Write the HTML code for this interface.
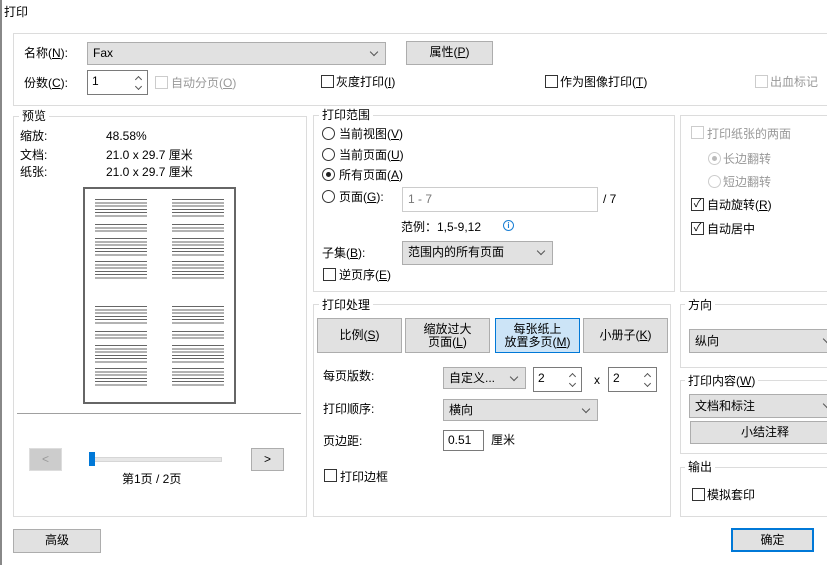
<!DOCTYPE html><html><head><meta charset="utf-8"><style>
*{box-sizing:border-box;margin:0;padding:0}
body{width:827px;height:565px;background:#fff;position:relative;overflow:hidden;font:12px "Liberation Sans","Noto Sans CJK SC",sans-serif;color:#000}
.a{position:absolute;white-space:nowrap;line-height:14px}
.g{position:absolute;border:1px solid #dcdcdc}
.lg{position:absolute;background:#fff;padding:0 3px;line-height:14px}
.cb{position:absolute;width:13px;height:13px;border:1px solid #333;background:#fff}
.cb.d{border-color:#ccc}
.rd{position:absolute;width:13px;height:13px;border:1px solid #333;border-radius:50%;background:#fff}
.rd.d{border-color:#ccc}
.btn{position:absolute;background:#e1e1e1;border:1px solid #adadad;text-align:center;line-height:20px}
.cmb{position:absolute;background:#e1e1e1;border:1px solid #adadad;padding-left:5px;line-height:20px}
.cmb:after{content:"";position:absolute;right:8px;top:6px;width:5px;height:5px;border-right:1px solid #555;border-bottom:1px solid #555;transform:rotate(45deg)}
.in{position:absolute;background:#fff;border:1px solid #7a7a7a;padding-left:4px;line-height:20px}
.sp{position:absolute;right:4px;top:4px;width:8px;height:15px}
.sp:before,.sp:after{content:"";position:absolute;left:1px;width:4px;height:4px;border-left:1.5px solid #555;border-top:1.5px solid #555}
.sp:before{top:2px;transform:rotate(45deg)}
.sp:after{top:9px;transform:rotate(-135deg)}
.u{text-decoration:underline}
.dis{color:#999}
.pq{position:absolute;width:52px}
.p{position:absolute;left:0;width:52px;background:repeating-linear-gradient(#666 0 1px,transparent 1px 3.3px)}
</style></head><body>
<div style="position:absolute;left:0;top:0;width:2px;height:565px;background:#888"></div>
<div class="a" style="left:4px;top:5px">打印</div>

<div class="g" style="left:13px;top:33px;width:830px;height:73px"></div>
<div class="a" style="left:24px;top:46px">名称(<span class="u">N</span>):</div>
<div class="cmb" style="left:87px;top:42px;width:299px;height:23px">Fax</div>
<div class="btn" style="left:406px;top:41px;width:87px;height:24px">属性(<span class="u">P</span>)</div>
<div class="a" style="left:24px;top:76px">份数(<span class="u">C</span>):</div>
<div class="in" style="left:87px;top:70px;width:61px;height:25px">1<div class="sp"></div></div>
<div class="cb d" style="left:155px;top:76px"></div><div class="a dis" style="left:171px;top:76px">自动分页(<span class="u">O</span>)</div>
<div class="cb" style="left:321px;top:75px"></div><div class="a" style="left:336px;top:75px">灰度打印(<span class="u">I</span>)</div>
<div class="cb" style="left:545px;top:75px"></div><div class="a" style="left:560px;top:75px">作为图像打印(<span class="u">T</span>)</div>
<div class="cb d" style="left:755px;top:75px"></div><div class="a dis" style="left:770px;top:75px">出血标记</div>

<div class="g" style="left:13px;top:116px;width:294px;height:401px"></div>
<div class="lg" style="left:19px;top:109px">预览</div>
<div class="a" style="left:20px;top:129px">缩放:</div><div class="a" style="left:106px;top:129px">48.58%</div>
<div class="a" style="left:20px;top:148px">文档:</div><div class="a" style="left:106px;top:148px">21.0 x 29.7 厘米</div>
<div class="a" style="left:20px;top:165px">纸张:</div><div class="a" style="left:106px;top:165px">21.0 x 29.7 厘米</div>
<div style="position:absolute;left:83px;top:187px;width:153px;height:217px;border:2px solid #666;background:#fff"></div>
<div class="pq" style="left:95px;top:199px"><div class="p" style="top:0;height:20px"></div><div class="p" style="top:25px;height:9px"></div><div class="p" style="top:39px;height:20px"></div><div class="p" style="top:62px;height:18px"></div></div>
<div class="pq" style="left:172px;top:199px"><div class="p" style="top:0;height:20px"></div><div class="p" style="top:25px;height:9px"></div><div class="p" style="top:39px;height:20px"></div><div class="p" style="top:62px;height:18px"></div></div>
<div class="pq" style="left:95px;top:306px"><div class="p" style="top:0;height:20px"></div><div class="p" style="top:25px;height:9px"></div><div class="p" style="top:39px;height:20px"></div><div class="p" style="top:62px;height:18px"></div></div>
<div class="pq" style="left:172px;top:306px"><div class="p" style="top:0;height:20px"></div><div class="p" style="top:25px;height:9px"></div><div class="p" style="top:39px;height:20px"></div><div class="p" style="top:62px;height:18px"></div></div>
<div style="position:absolute;left:17px;top:413px;width:284px;height:1px;background:#a0a0a0"></div>
<div class="btn" style="left:29px;top:448px;width:33px;height:23px;background:#ccc;border-color:#ddd;color:#999">&lt;</div>
<div class="btn" style="left:251px;top:448px;width:33px;height:23px">&gt;</div>
<div style="position:absolute;left:90px;top:457px;width:132px;height:5px;background:#e7e7e7;border:1px solid #d6d6d6"></div>
<div style="position:absolute;left:89px;top:452px;width:6px;height:14px;background:#0078d7"></div>
<div class="a" style="left:122px;top:472px">第1页 / 2页</div>
<div class="btn" style="left:13px;top:529px;width:88px;height:24px">高级</div>

<div class="g" style="left:313px;top:115px;width:362px;height:177px"></div>
<div class="lg" style="left:319px;top:108px">打印范围</div>
<div class="rd" style="left:322px;top:127px"></div><div class="a" style="left:339px;top:127px">当前视图(<span class="u">V</span>)</div>
<div class="rd" style="left:322px;top:148px"></div><div class="a" style="left:339px;top:148px">当前页面(<span class="u">U</span>)</div>
<div class="rd" style="left:322px;top:168px"><div style="position:absolute;left:3px;top:3px;width:5px;height:5px;border-radius:50%;background:#222"></div></div><div class="a" style="left:339px;top:168px">所有页面(<span class="u">A</span>)</div>
<div class="rd" style="left:322px;top:190px"></div><div class="a" style="left:339px;top:190px">页面(<span class="u">G</span>):</div>
<div class="in" style="left:402px;top:187px;width:196px;height:25px;border-color:#ccc;color:#777;line-height:23px;padding-left:5px">1 - 7</div>
<div class="a" style="left:603px;top:192px">/ 7</div>
<div class="a" style="left:401px;top:220px">范例：1,5-9,12</div>
<div style="position:absolute;left:503px;top:220px;width:11px;height:11px;border:1px solid #1a7fd4;border-radius:50%;color:#1a7fd4;font-size:8px;line-height:9px;text-align:center;font-weight:bold">i</div>
<div class="a" style="left:322px;top:246px">子集(<span class="u">B</span>):</div>
<div class="cmb" style="left:402px;top:241px;width:151px;height:24px">范围内的所有页面</div>
<div class="cb" style="left:323px;top:268px"></div><div class="a" style="left:339px;top:268px">逆页序(<span class="u">E</span>)</div>

<div class="g" style="left:680px;top:115px;width:160px;height:177px"></div>
<div class="cb d" style="left:691px;top:126px"></div><div class="a dis" style="left:707px;top:127px">打印纸张的两面</div>
<div class="rd d" style="left:708px;top:152px"><div style="position:absolute;left:3px;top:3px;width:5px;height:5px;border-radius:50%;background:#bbb"></div></div><div class="a dis" style="left:723px;top:152px">长边翻转</div>
<div class="rd d" style="left:708px;top:175px"></div><div class="a dis" style="left:723px;top:175px">短边翻转</div>
<div class="cb" style="left:691px;top:198px;font-size:11px;line-height:11px;text-align:center">✓</div><div class="a" style="left:707px;top:198px">自动旋转(<span class="u">R</span>)</div>
<div class="cb" style="left:691px;top:222px;font-size:11px;line-height:11px;text-align:center">✓</div><div class="a" style="left:707px;top:222px">自动居中</div>

<div class="g" style="left:313px;top:304px;width:358px;height:213px"></div>
<div class="lg" style="left:319px;top:298px">打印处理</div>
<div class="btn" style="left:317px;top:318px;width:85px;height:35px;line-height:33px">比例(<span class="u">S</span>)</div>
<div class="btn" style="left:405px;top:318px;width:85px;height:35px;line-height:13px;padding-top:4px">缩放过大<br>页面(<span class="u">L</span>)</div>
<div class="btn" style="left:495px;top:318px;width:85px;height:35px;line-height:13px;padding-top:4px;background:#cce4f7;border-color:#0078d7">每张纸上<br>放置多页(<span class="u">M</span>)</div>
<div class="btn" style="left:583px;top:318px;width:85px;height:35px;line-height:33px">小册子(<span class="u">K</span>)</div>
<div class="a" style="left:323px;top:369px">每页版数:</div>
<div class="cmb" style="left:443px;top:367px;width:83px;height:22px">自定义...</div>
<div class="in" style="left:533px;top:367px;width:49px;height:25px">2<div class="sp"></div></div>
<div class="a" style="left:594px;top:373px">x</div>
<div class="in" style="left:608px;top:367px;width:49px;height:25px">2<div class="sp"></div></div>
<div class="a" style="left:323px;top:402px">打印顺序:</div>
<div class="cmb" style="left:443px;top:399px;width:155px;height:22px">横向</div>
<div class="a" style="left:323px;top:434px">页边距:</div>
<div class="in" style="left:443px;top:430px;width:41px;height:21px;line-height:19px">0.51</div>
<div class="a" style="left:491px;top:433px">厘米</div>
<div class="cb" style="left:324px;top:469px"></div><div class="a" style="left:340px;top:470px">打印边框</div>

<div class="g" style="left:680px;top:304px;width:160px;height:64px"></div>
<div class="lg" style="left:685px;top:298px">方向</div>
<div class="cmb" style="left:689px;top:329px;width:150px;height:24px;line-height:22px">纵向</div>
<div class="g" style="left:680px;top:380px;width:160px;height:74px"></div>
<div class="lg" style="left:685px;top:374px">打印内容(<span class="u">W</span>)</div>
<div class="cmb" style="left:689px;top:394px;width:150px;height:24px;line-height:22px">文档和标注</div>
<div class="btn" style="left:690px;top:421px;width:150px;height:23px">小结注释</div>
<div class="g" style="left:680px;top:467px;width:160px;height:50px"></div>
<div class="lg" style="left:685px;top:460px">输出</div>
<div class="cb" style="left:692px;top:488px"></div><div class="a" style="left:707px;top:488px">模拟套印</div>

<div class="btn" style="left:731px;top:528px;width:83px;height:24px;border:2px solid #0078d7;line-height:20px">确定</div>
</body></html>
